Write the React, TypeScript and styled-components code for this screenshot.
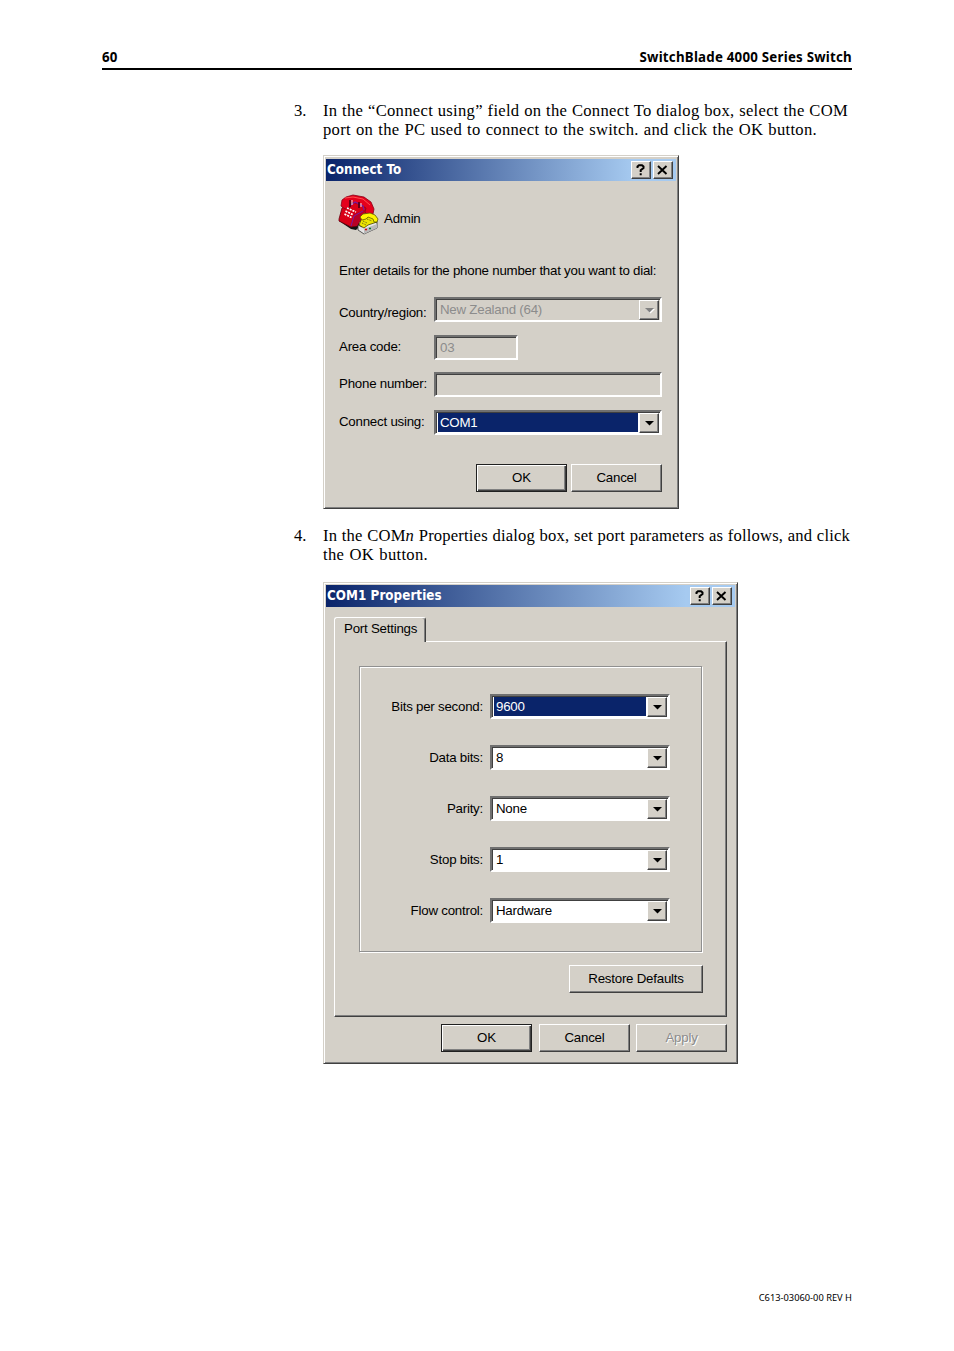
import React from "react";
import styled, { createGlobalStyle, css } from "styled-components";

const GlobalStyle = createGlobalStyle`
  * {
    box-sizing: border-box;
  }

  body {
    margin: 0;
    background: #fff;
    color: #000;
  }
`;

interface SelectProps {
  value: string;
  width: number;
  selected?: boolean;
  disabled?: boolean;
}

const SelectBox: React.FC<SelectProps> = ({ value, width, selected, disabled }) => {
  return (
    <Field $width={width} $height={25} $disabled={disabled}>
      <Value $selected={selected} $disabled={disabled}>
        {value}
      </Value>
      <ArrowButton>
        <svg width="11" height="7" viewBox="0 0 11 7">
          {disabled && <path d="M2 2h9L6.500 6.500z" fill="#fff" />}
          <path d="M1 1h9L5.500 5.500z" fill={disabled ? "#808080" : "#000"} />
        </svg>
      </ArrowButton>
    </Field>
  );
};

const TitleButtons: React.FC = () => {
  return (
    <TitleButtonGroup>
      <TitleButton>
        <svg width="11" height="12" viewBox="0 0 11 12">
          <path d="M2.500 4V2.500L4 1.200h3L8.500 2.500V4L5.700 6.300V8M5.700 9.200v2" stroke="#000" strokeWidth="2" fill="none" />
        </svg>
      </TitleButton>
      <TitleButton>
        <svg width="11" height="12" viewBox="0 0 11 12">
          <path d="M1 2l8.500 8M9.500 2L1 10" stroke="#000" strokeWidth="1.900" fill="none" />
        </svg>
      </TitleButton>
    </TitleButtonGroup>
  );
};

const PhoneIcon: React.FC = () => {
  return (
    <svg width="42" height="42" viewBox="8 8 42 42">
      <path d="M9 36l12 8 5 1 4-4-2-5z" fill="#111" />
      <path d="M9 34l3-11 6-4 10-3 10 7 1 8-9 5-3 5-6 1-12-6z" fill="#d90016" stroke="#6a0010" strokeWidth=".8" />
      <path d="M20 41l4-12 13-5 1 7-8 4-3 6z" fill="#b80025" />
      <path d="M12 15l4-3 7-2 11 2 7 5 3 7-1 5-5 1-3-3 1-4-7-4-8-2-1 5-5 2-4-3z" fill="#e5001c" stroke="#8c0016" strokeWidth=".8" />
      <path d="M15 13l8-1 10 2 7 6" stroke="#ff5050" fill="none" />
      <path d="M21 20l4-3 8 4 1 4" stroke="#7a18a0" strokeWidth="1.200" fill="none" />
      <path d="M21 41l3-10 9-5" stroke="#7a18a0" fill="none" />
      <path d="M20 15v7M29 17v6" stroke="#400010" strokeWidth="1.500" />
      <path d="M22 15v5M31 18v4" stroke="#f5dfe0" />
      <path d="M17 23l9 4M15.500 26l8 4M14.500 29l7 3.500" stroke="#fff" strokeWidth="1.700" strokeDasharray="2 1" />
      <path d="M28 40l4 2 6-4 9-1v6l-13 6-6-4z" fill="#e6e6e6" stroke="#333" strokeWidth=".8" />
      <path d="M34 44l13-5v4l-13 6z" fill="#b9b9b9" />
      <path d="M35 44.500h2" stroke="#e00000" strokeWidth="1.500" />
      <path d="M39 43.500h2" stroke="#087a30" strokeWidth="1.500" />
      <path d="M29 40l3-7 6-3 8 2 1 5-9 3-4 3z" fill="#eee600" stroke="#494600" strokeWidth=".8" />
      <path d="M30 32l3-3 7-1 5 2 3 4-1 3-3 0-1-3-5-2-2 2-4 1z" fill="#fff500" stroke="#616000" strokeWidth=".8" />
      <path d="M33 36l4 2M32 38l4 2M37 34l5 2" stroke="#68651a" strokeDasharray="1 .8" />
    </svg>
  );
};

const portSettings = [
  { label: "Bits per second:", value: "9600", selected: true },
  { label: "Data bits:", value: "8" },
  { label: "Parity:", value: "None" },
  { label: "Stop bits:", value: "1" },
  { label: "Flow control:", value: "Hardware" },
];

const App: React.FC = () => {
  return (
    <Page>
      <GlobalStyle />
      <Header>
        <span>60</span>
        <span>SwitchBlade 4000 Series Switch</span>
      </Header>

      <Step>
        <StepNumber>3.</StepNumber>
        <div>
          <Line $width={525}>In the “Connect using” field on the Connect To dialog box, select the COM</Line>
          <Line $width={494}>port on the PC used to connect to the switch. and click the OK button.</Line>
        </div>
      </Step>

      <ConnectDialog>
        <TitleBar>
          <Title>Connect To</Title>
          <TitleButtons />
        </TitleBar>
        <Connection>
          <PhoneIcon />
          <span>Admin</span>
        </Connection>
        <Intro>Enter details for the phone number that you want to dial:</Intro>
        <ConnectForm>
          <FormRow $height={38}>
            <ConnectLabel $drop={8}>Country/region:</ConnectLabel>
            <SelectBox value="New Zealand (64)" width={228} disabled />
          </FormRow>
          <FormRow $height={37}>
            <ConnectLabel>Area code:</ConnectLabel>
            <Field $width={84} $height={25} $disabled>
              <Value $disabled>03</Value>
            </Field>
          </FormRow>
          <FormRow $height={38}>
            <ConnectLabel>Phone number:</ConnectLabel>
            <Field $width={228} $height={25} $disabled />
          </FormRow>
          <FormRow $height={54}>
            <ConnectLabel>Connect using:</ConnectLabel>
            <SelectBox value="COM1" width={228} selected />
          </FormRow>
        </ConnectForm>
        <ConnectActions>
          <Button $width={91} $primary>OK</Button>
          <Button $width={91}>Cancel</Button>
        </ConnectActions>
      </ConnectDialog>

      <Step>
        <StepNumber>4.</StepNumber>
        <div>
          <Line $width={527} $tight>
            In the COM<i>n</i> Properties dialog box, set port parameters as follows, and click
          </Line>
          <Line $width={105}>the OK button.</Line>
        </div>
      </Step>

      <PropertiesDialog>
        <TitleBar>
          <Title>COM1 Properties</Title>
          <TitleButtons />
        </TitleBar>
        <Tabs>
          <Tab>Port Settings</Tab>
        </Tabs>
        <TabPanel>
          <GroupBox>
            {portSettings.map((setting) => (
              <SettingRow key={setting.label}>
                <SettingLabel>{setting.label}</SettingLabel>
                <SelectBox value={setting.value} width={180} selected={setting.selected} />
              </SettingRow>
            ))}
          </GroupBox>
          <RestoreRow>
            <Button $width={134}>Restore Defaults</Button>
          </RestoreRow>
        </TabPanel>
        <PropertiesActions>
          <Button $width={91} $primary>OK</Button>
          <Button $width={91}>Cancel</Button>
          <Button $width={91} $disabled>Apply</Button>
        </PropertiesActions>
      </PropertiesDialog>

      <Footer>C613-03060-00 REV H</Footer>
    </Page>
  );
};

const Page = styled.main`
  width: 954px;
  height: 1351px;
  padding: 47px 102px 0;
  display: flex;
  flex-direction: column;
  background: #fff;
`;

const Header = styled.header`
  height: 23px;
  margin-bottom: 31px;
  display: flex;
  justify-content: space-between;
  border-bottom: 2px solid #000;
  font: bold 13.3px/20px "Noto Sans", sans-serif;
  letter-spacing: 0.23px;
`;

const Step = styled.section`
  display: flex;
  margin-left: 192px;
  font: 16.6px/19px "Liberation Serif", serif;
`;

const StepNumber = styled.span`
  width: 29px;
`;

const Line = styled.div<{ $width: number; $tight?: boolean }>`
  width: ${({ $width }) => $width}px;
  white-space: nowrap;
  letter-spacing: ${({ $tight }) => ($tight ? 0.18 : 0.3)}px;
  text-align-last: justify;
`;

const Dialog = styled.section`
  margin-left: 221px;
  padding: 2px;
  display: flex;
  flex-direction: column;
  background: #d4d0c8;
  border: 1px solid;
  border-color: #d4d0c8 #404040 #404040 #d4d0c8;
  box-shadow: inset 1px 1px #fff, inset -1px -1px #808080;
  font: 13.3px/16px "Liberation Sans", sans-serif;
  letter-spacing: -0.23px;
`;

const ConnectDialog = styled(Dialog)`
  width: 356px;
  height: 354px;
  margin-top: 16px;
  margin-bottom: 17px;
  padding-top: 3px;
`;

const PropertiesDialog = styled(Dialog)`
  width: 415px;
  height: 482px;
  margin-top: 18px;
`;

const TitleBar = styled.header`
  height: 22px;
  flex: none;
  padding: 0 3px 0 1px;
  display: flex;
  align-items: center;
  justify-content: space-between;
  background: linear-gradient(90deg, #0a246a, #a6caf0 88%);
`;

const Title = styled.h2`
  margin: 0;
  color: #fff;
  font: bold 13.3px/20px "DejaVu Sans Condensed", "DejaVu Sans", sans-serif;
  letter-spacing: 0.05px;
`;

const TitleButtonGroup = styled.div`
  display: flex;
  gap: 2px;
`;

const raised = css`
  background: #d4d0c8;
  border: 1px solid;
  border-color: #fff #404040 #404040 #fff;
  box-shadow: inset -1px -1px #808080;
`;

const TitleButton = styled.button`
  ${raised}
  width: 20px;
  height: 18px;
  padding: 0 1px 1px 0;
  display: flex;
  align-items: center;
  justify-content: center;
`;

const Connection = styled.div`
  height: 42px;
  margin: 12px 0 0 12px;
  display: flex;
  align-items: center;
  gap: 4px;

  span {
    padding-top: 9px;
  }
`;

const Intro = styled.p`
  margin: 28px 0 18px 13px;
  white-space: nowrap;
`;

const ConnectForm = styled.div`
  margin-left: 13px;
`;

const FormRow = styled.div<{ $height: number }>`
  height: ${({ $height }) => $height}px;
  display: flex;
  align-items: flex-start;
`;

const ConnectLabel = styled.label<{ $drop?: number }>`
  width: 95px;
  padding-top: ${({ $drop = 4 }) => $drop}px;
  flex: none;
  white-space: nowrap;
`;

const Field = styled.div<{ $width: number; $height: number; $disabled?: boolean }>`
  width: ${({ $width }) => $width}px;
  height: ${({ $height }) => $height}px;
  padding: 1px;
  display: flex;
  flex: none;
  background: ${({ $disabled }) => ($disabled ? "#d4d0c8" : "#fff")};
  border: 2px solid;
  border-color: #707070 #fff #fff #707070;
  box-shadow: inset 1px 1px #404040;
`;

const Value = styled.span<{ $selected?: boolean; $disabled?: boolean }>`
  flex: 1;
  margin: 0 1px;
  padding-left: 2px;
  line-height: 19px;
  color: ${({ $selected, $disabled }) => ($selected ? "#fff" : $disabled ? "#8c8c8c" : "#000")};
  background: ${({ $selected }) => ($selected ? "#0a246a" : "transparent")};
`;

const ArrowButton = styled.button`
  ${raised}
  width: 20px;
  height: 20px;
  padding: 0;
  display: flex;
  align-items: center;
  justify-content: center;
`;

const Button = styled.button<{ $width: number; $primary?: boolean; $disabled?: boolean }>`
  ${raised}
  width: ${({ $width }) => $width}px;
  height: 28px;
  padding: 0 0 1px;
  font: inherit;
  letter-spacing: inherit;
  color: ${({ $disabled }) => ($disabled ? "#8c8c8c" : "#000")};
  text-shadow: ${({ $disabled }) => ($disabled ? "1px 1px #fff" : "none")};

  ${({ $primary }) =>
    $primary &&
    css`
      border-color: #202020;
      box-shadow: inset 1px 1px #fff, inset -1px -1px #404040, inset -2px -2px #808080;
    `}
`;

const ConnectActions = styled.div`
  display: flex;
  justify-content: flex-end;
  gap: 4px;
  padding-right: 14px;
`;

const Tabs = styled.div`
  height: 34px;
  padding: 10px 0 0 8px;
  flex: none;
`;

const Tab = styled.div`
  position: relative;
  width: 92px;
  height: 25px;
  padding: 3px 0 0 9px;
  background: #d4d0c8;
  border: 1px solid;
  border-color: #fff #404040 transparent #fff;
  border-bottom: 0;
  border-radius: 3px 3px 0 0;
  box-shadow: inset -1px 0 #808080;
  white-space: nowrap;
`;

const TabPanel = styled.div`
  width: 393px;
  height: 376px;
  margin-left: 8px;
  padding: 24px 23px 0 24px;
  border: 1px solid;
  border-color: #fff #404040 #404040 #fff;
  box-shadow: inset -1px -1px #808080;
`;

const GroupBox = styled.div`
  width: 343px;
  height: 286px;
  padding-top: 27px;
  border: 1px solid #909090;
  box-shadow: inset 1px 1px #fff, 1px 1px #fff;
`;

const SettingRow = styled.div`
  height: 51px;
  display: flex;
  align-items: flex-start;
  gap: 7px;
`;

const SettingLabel = styled.label`
  width: 123px;
  padding-top: 5px;
  text-align: right;
`;

const RestoreRow = styled.div`
  display: flex;
  justify-content: flex-end;
  padding-top: 13px;
`;

const PropertiesActions = styled.div`
  margin: 7px 8px 0 0;
  display: flex;
  justify-content: flex-end;
  gap: 6px;

  button:first-child {
    margin-right: 1px;
  }
`;

const Footer = styled.footer`
  margin-top: 227px;
  text-align: right;
  font: 9.3px/13px "Noto Sans", sans-serif;
`;

export default App;
